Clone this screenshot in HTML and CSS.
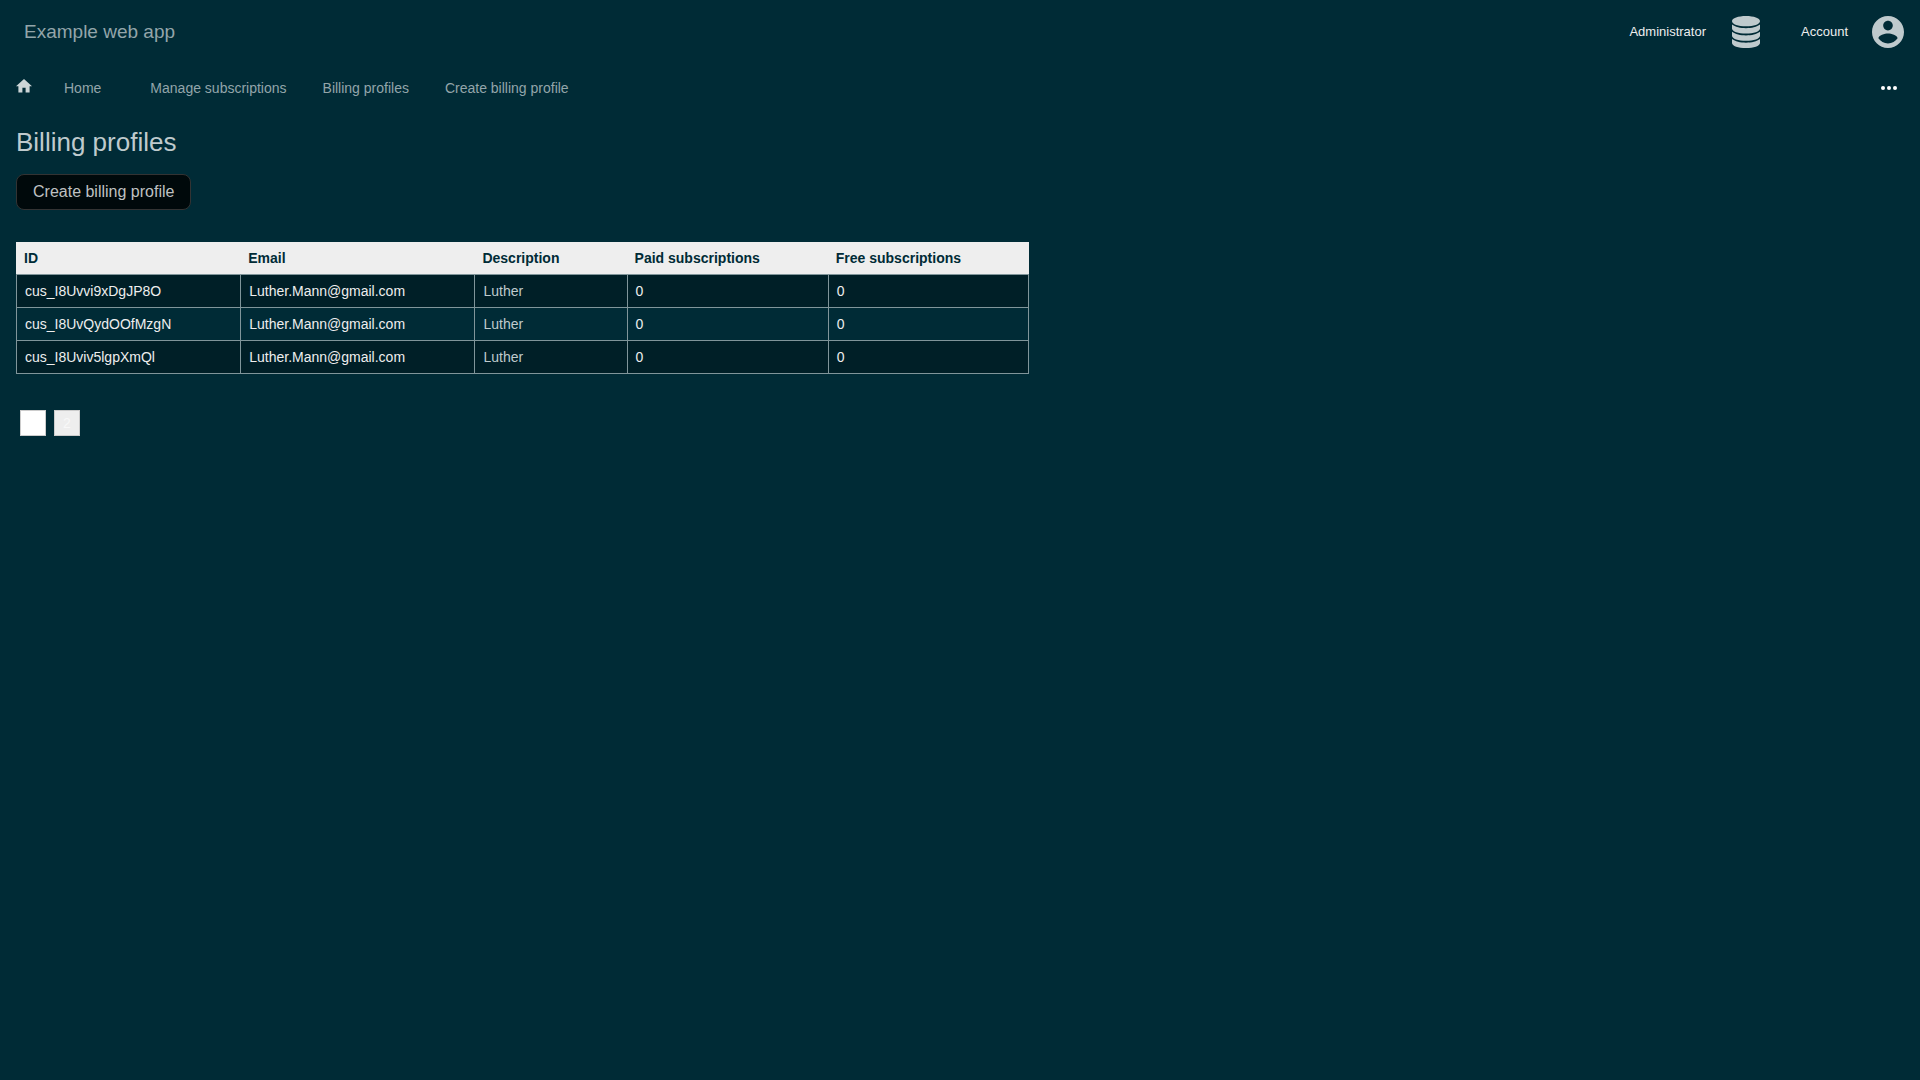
FILE: index.html
```html
<!DOCTYPE html>
<html lang="en">
<head>
<meta charset="utf-8">
<title>Billing profiles</title>
<link rel="stylesheet" href="styles.css">
</head>
<body>
<header class="topbar">
  <div class="brand">Example web app</div>
  <div class="menus">
    <button class="menu" type="button">
      Administrator
      <svg class="menu-icon menu-icon-data" viewBox="0 0 448 512" aria-hidden="true"><path d="M448 82C448 128 348 164 224 164S0 128 0 82 100 0 224 0s224 36 224 82zM448 136v62c0 46-100 82-224 82S0 244 0 198v-62c48 40 136 58 224 58s176-18 224-58zM448 252v62c0 46-100 82-224 82S0 360 0 314v-62c48 40 136 58 224 58s176-18 224-58zM448 368v62c0 46-100 82-224 82S0 476 0 430v-62c48 40 136 58 224 58s176-18 224-58z"/></svg>
    </button>
    <button class="menu" type="button">
      Account
      <svg class="menu-icon" viewBox="2 2 20 20" aria-hidden="true"><path d="M12 2C6.480 2 2 6.480 2 12s4.480 10 10 10 10-4.480 10-10S17.520 2 12 2zm0 3c1.660 0 3 1.340 3 3s-1.340 3-3 3-3-1.340-3-3 1.340-3 3-3zm0 14.200c-2.500 0-4.710-1.280-6-3.220.03-1.990 4-3.080 6-3.080 1.990 0 5.970 1.090 6 3.080-1.290 1.940-3.500 3.220-6 3.220z"/></svg>
    </button>
  </div>
</header>
<nav class="navbar">
  <a class="home" href="#" aria-label="Home"><svg class="home-icon" viewBox="2 3 20 22.500" aria-hidden="true"><path d="M10 20v-6h4v6h5v-8h3L12 3 2 12h3v8z"/></svg></a>
  <div class="crumbs">
    <a class="crumb-first" href="#">Home</a>
    <a href="#">Manage subscriptions</a>
    <a href="#">Billing profiles</a>
    <a href="#">Create billing profile</a>
  </div>
  <button class="more" type="button" aria-label="More"><svg class="more-icon" viewBox="0 0 16 4" aria-hidden="true"><circle cx="2" cy="2" r="2"/><circle cx="8" cy="2" r="2"/><circle cx="14" cy="2" r="2"/></svg></button>
</nav>
<main class="content">
  <h1 class="title">Billing profiles</h1>
  <button class="create" type="button">Create billing profile</button>
  <table class="profiles">
    <colgroup><col class="col-id"><col class="col-email"><col class="col-desc"><col class="col-count"><col class="col-count"></colgroup>
    <thead>
      <tr><th>ID</th><th>Email</th><th>Description</th><th>Paid subscriptions</th><th>Free subscriptions</th></tr>
    </thead>
    <tbody>
      <tr><td><a href="#">cus_I8Uvvi9xDgJP8O</a></td><td><a href="#">Luther.Mann@gmail.com</a></td><td>Luther</td><td><a href="#">0</a></td><td><a href="#">0</a></td></tr>
      <tr><td><a href="#">cus_I8UvQydOOfMzgN</a></td><td><a href="#">Luther.Mann@gmail.com</a></td><td>Luther</td><td><a href="#">0</a></td><td><a href="#">0</a></td></tr>
      <tr><td><a href="#">cus_I8Uviv5lgpXmQl</a></td><td><a href="#">Luther.Mann@gmail.com</a></td><td>Luther</td><td><a href="#">0</a></td><td><a href="#">0</a></td></tr>
    </tbody>
  </table>
  <div class="pages">
    <a class="page page-current" href="#">1</a>
    <a class="page" href="#">2</a>
  </div>
</main>
</body>
</html>
```
FILE: styles.css
```css
* { box-sizing: border-box; }
body {
  margin: 0;
  background: #002b36;
  color: #bfcacd;
  font: 14px/16px "Liberation Sans", Arial, sans-serif;
}
a { color: inherit; text-decoration: none; }
button {
  margin: 0;
  padding: 0;
  border: 0;
  background: none;
  font: inherit;
  cursor: pointer;
}
svg { display: block; fill: currentColor; }
.topbar {
  display: flex;
  align-items: center;
  justify-content: space-between;
  height: 64px;
  padding: 0 16px 0 24px;
}
.brand { color: #93a5aa; font-size: 19px; line-height: 24px; }
.menus { display: flex; gap: 39px; }
.menu {
  display: flex;
  align-items: center;
  gap: 24px;
  color: #eee;
  font-size: 13px;
}
.menu-icon { width: 32px; height: 32px; color: #bfcacd; }
.menu-icon-data { padding: 0 2px; }
.navbar {
  display: flex;
  align-items: center;
  gap: 32px;
  height: 48px;
  padding: 0 23px 0 16px;
  color: #93a5aa;
}
.home { color: #ccd5d7; }
.home-icon { width: 16px; height: 18px; }
.crumbs { display: flex; gap: 36px; }
.crumb-first { margin-right: 13px; }
.more { margin-left: auto; color: #fff; }
.more-icon { width: 16px; height: 4px; }
.content { padding: 12px 16px; }
.title { margin: 0; font-size: 26px; font-weight: 400; line-height: 36px; }
.create {
  display: block;
  height: 36px;
  margin: 14px 0 32px;
  padding: 0 16px;
  border: 1px solid #333;
  border-radius: 8px;
  background: #00090b;
  color: #bfc1c2;
  font-size: 16px;
}
.profiles {
  width: 1013px;
  max-width: 100%;
  border-spacing: 0;
  table-layout: fixed;
}
.col-id { width: 224px; }
.col-email { width: 234px; }
.col-desc { width: 152px; }
.col-count { width: 201px; }
th, td { height: 33px; padding: 0 8px; text-align: left; }
th { height: 32px; background: #eee; color: #002b36; }
td { border: solid #80959a; border-width: 1px 0 0 1px; }
td:last-child { border-right-width: 1px; }
tbody tr:last-child td { height: 34px; border-bottom-width: 1px; }
td a { color: #eee; }
tbody tr:nth-child(odd) { background: #001f27; }
.pages { display: flex; gap: 8px; padding: 36px 4px; }
.page {
  width: 26px;
  border: 1px solid #ccc;
  background: #eee;
  color: #f8f8f8;
  line-height: 24px;
  text-align: center;
}
.page-current { background: #fff; color: #fff; }
```
